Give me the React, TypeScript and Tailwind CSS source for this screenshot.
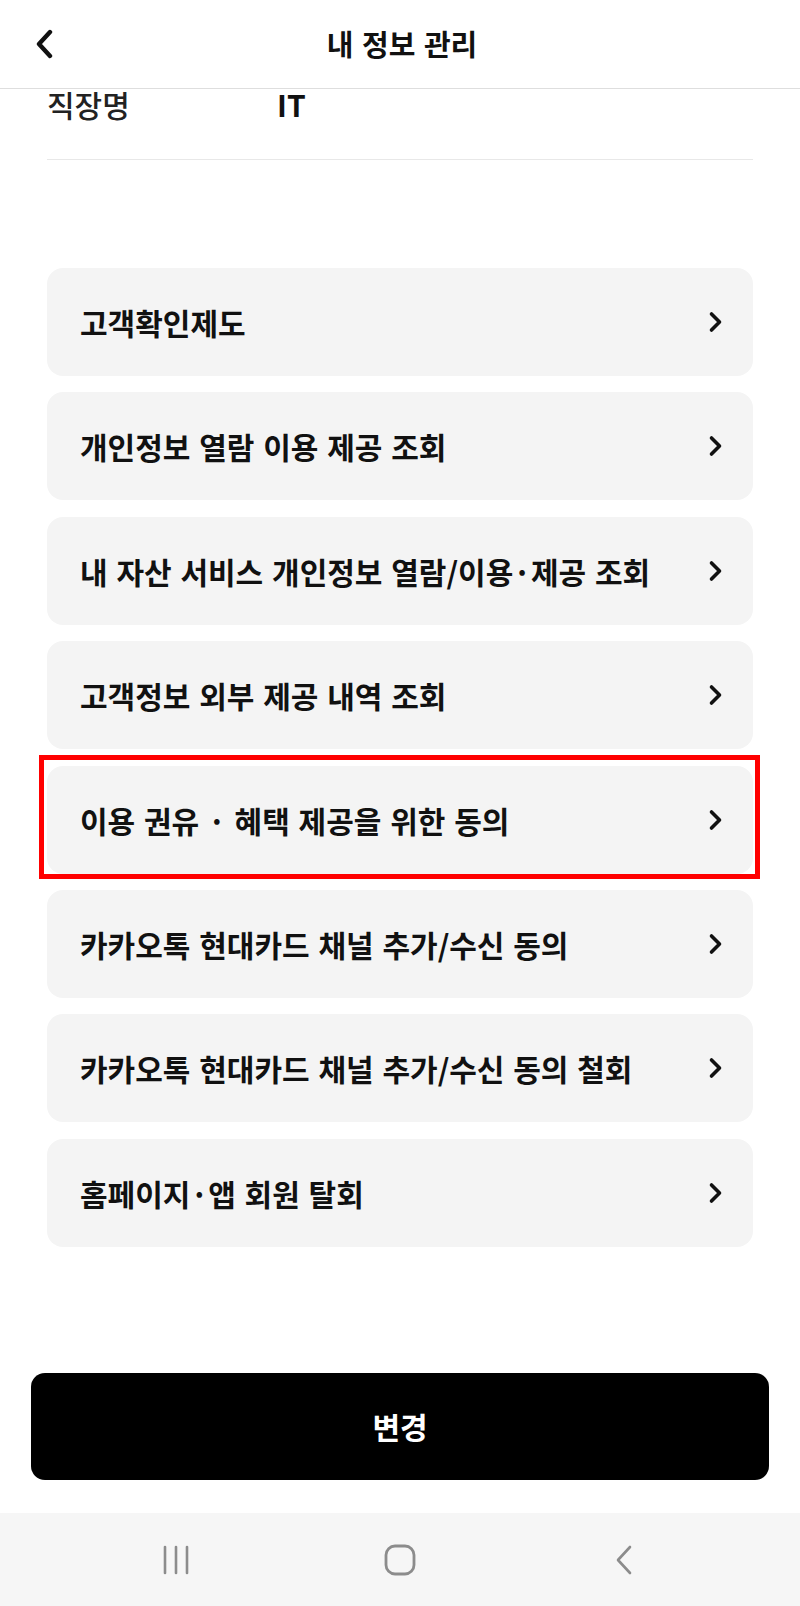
import React from 'react'

const menuItems = [
  '고객확인제도',
  '개인정보 열람 이용 제공 조회',
  '내 자산 서비스 개인정보 열람/이용·제공 조회',
  '고객정보 외부 제공 내역 조회',
  '이용 권유 · 혜택 제공을 위한 동의',
  '카카오톡 현대카드 채널 추가/수신 동의',
  '카카오톡 현대카드 채널 추가/수신 동의 철회',
  '홈페이지·앱 회원 탈회',
]

// index of the item outlined in red
const HIGHLIGHT = 4

function ChevronRight() {
  return (
    <svg width="16" height="24" viewBox="0 0 16 24" fill="none" className="shrink-0">
      <polyline points="3.5,4 11.5,12 3.5,20" stroke="#111" strokeWidth="3.6" strokeLinecap="round" strokeLinejoin="round" />
    </svg>
  )
}

function MenuCard({ label }: { label: string }) {
  return (
    <button className="w-full h-[108px] rounded-[16px] bg-[#f4f4f4] pl-[33px] pr-[29px] flex items-center justify-between text-left">
      <span className="text-[30px] leading-[34px] font-bold text-[#111] [word-spacing:2px]">{label}</span>
      <ChevronRight />
    </button>
  )
}

export default function App() {
  return (
    <div className="w-[800px] min-h-[1606px] bg-white flex flex-col font-['Noto_Sans_CJK_KR','Noto_Sans',sans-serif] text-[#111]">
      {/* Header */}
      <div className="h-[89px] border-b border-[#dedede] grid grid-cols-[1fr_auto_1fr] items-center shrink-0">
        <button className="pl-[34px] flex items-center">
          <svg width="22" height="30" viewBox="0 0 22 30" fill="none">
            <polyline points="16,3 5,15 16,27" stroke="#111" strokeWidth="4.4" strokeLinecap="round" strokeLinejoin="round" />
          </svg>
        </button>
        <h1 className="text-[29px] leading-[34px] font-bold [word-spacing:2px] pb-[2px] pl-[4px]">내 정보 관리</h1>
        <div />
      </div>

      {/* Info row (scrolled under header) */}
      <div className="px-[47px]">
        <div className="h-[71px] border-b border-[#e8e8e8] flex items-start">
          <span className="w-[230px] text-[30px] leading-[30px] font-medium text-[#222]">직장명</span>
          <span className="text-[30px] leading-[30px] font-bold">IT</span>
        </div>
      </div>

      {/* Menu */}
      <div className="mt-[108px] px-[47px] flex flex-col gap-[16.4px]">
        {menuItems.map((item, i) =>
          i === HIGHLIGHT ? (
            <div key={item} className="relative">
              <MenuCard label={item} />
              <div className="absolute -top-[11px] -bottom-[5px] -left-[8px] -right-[7px] border-[5px] border-[#ff0000] pointer-events-none" />
            </div>
          ) : (
            <MenuCard key={item} label={item} />
          )
        )}
      </div>

      {/* Submit */}
      <div className="mt-[126px] px-[31px]">
        <button className="w-full h-[107px] rounded-[14px] bg-black text-white text-[30px] font-bold">변경</button>
      </div>

      {/* System nav bar */}
      <div className="mt-auto h-[93px] bg-[#f6f6f6] flex items-center justify-center">
        <div className="w-[224px] flex justify-center">
          <svg width="30" height="30" viewBox="0 0 30 30" fill="none">
            <line x1="4" y1="2" x2="4" y2="28" stroke="#8c8c8c" strokeWidth="2.6" strokeLinecap="round" />
            <line x1="15" y1="2" x2="15" y2="28" stroke="#8c8c8c" strokeWidth="2.6" strokeLinecap="round" />
            <line x1="26" y1="2" x2="26" y2="28" stroke="#8c8c8c" strokeWidth="2.6" strokeLinecap="round" />
          </svg>
        </div>
        <div className="w-[224px] flex justify-center">
          <svg width="32" height="32" viewBox="0 0 32 32" fill="none">
            <rect x="2" y="2" width="28" height="28" rx="9" stroke="#8c8c8c" strokeWidth="2.8" />
          </svg>
        </div>
        <div className="w-[224px] flex justify-center">
          <svg width="22" height="32" viewBox="0 0 22 32" fill="none">
            <polyline points="17,3 5,16 17,29" stroke="#8c8c8c" strokeWidth="2.6" strokeLinecap="round" strokeLinejoin="round" />
          </svg>
        </div>
      </div>
    </div>
  )
}
